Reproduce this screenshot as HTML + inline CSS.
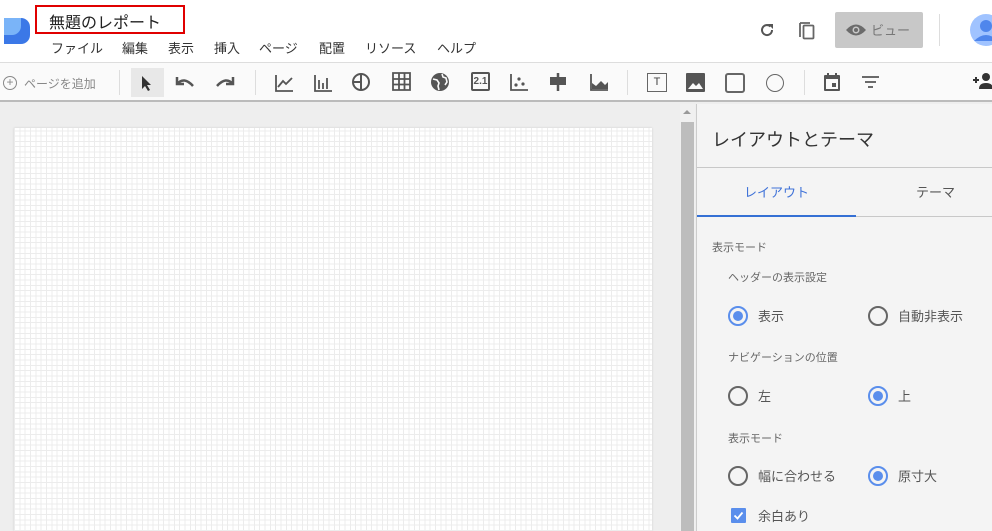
<!DOCTYPE html>
<html><head><meta charset="utf-8"><style>
*{margin:0;padding:0;box-sizing:border-box}
body{width:992px;height:531px;overflow:hidden;position:relative;background:#eee;font-family:"Liberation Sans","Noto Sans CJK JP",sans-serif;color:#333}
.abs{position:absolute}
.hdr{left:0;top:0;width:992px;height:63px;background:#fff;border-bottom:1px solid #ddd}
.tb{left:0;top:63px;width:992px;height:39px;background:#fafafa;border-bottom:2px solid #bbb}
.menu span{position:absolute;top:38px;font-size:13px;color:#333}
.ic{position:absolute;top:71px}
.sep{position:absolute;top:70px;width:1px;height:25px;background:#ddd}
.panel{left:696px;top:104px;width:296px;height:427px;background:#f4f4f4;border-left:1px solid #ccc}
.lbl{position:absolute;font-size:11px;color:#666}
.opt{position:absolute;font-size:13px;color:#555}
.rad{position:absolute;width:20px;height:20px;border-radius:50%;border:2px solid #666}
.rad.on{border-color:#5a8eec}
.rad.on::after{content:"";position:absolute;left:3px;top:3px;width:10px;height:10px;border-radius:50%;background:#5a8eec}
</style></head><body>
<div class="abs hdr"></div>
<svg class="abs" style="left:4px;top:18px" width="26" height="26"><path d="M0 0h17a9 9 0 0 1 9 9v8a9 9 0 0 1-9 9H0z" fill="#3b78e7"/><path d="M0 0h17v8a9 9 0 0 1-9 9H0z" fill="#7ab4f8"/></svg>
<div class="abs" style="left:35px;top:5px;width:150px;height:29px;border:2px solid #e00000"></div>
<div class="abs" style="left:49px;top:9px;font-size:16px;color:#222">無題のレポート</div>
<div class="menu"><span style="left:51px">ファイル</span><span style="left:122px">編集</span><span style="left:168px">表示</span><span style="left:214px">挿入</span><span style="left:259px">ページ</span><span style="left:319px">配置</span><span style="left:365px">リソース</span><span style="left:437px">ヘルプ</span></div>
<svg class="abs" style="left:759px;top:22px" width="16" height="16"><path d="M13 8A5 5 0 1 1 11.5 4.5" stroke="#555" stroke-width="2" fill="none"/><path d="M9 2h5v5z" fill="#555"/></svg>
<svg class="abs" style="left:798px;top:20px" width="18" height="20"><path d="M2 3v14M2 3h10" stroke="#666" stroke-width="1.8" fill="none"/><rect x="5.5" y="5.5" width="10" height="13" rx="1" stroke="#666" stroke-width="1.8" fill="none"/></svg>
<div class="abs" style="left:835px;top:12px;width:88px;height:36px;background:#c8c8c8;border-radius:2px"></div>
<svg class="abs" style="left:845px;top:22px" width="22" height="16"><path d="M1 8Q11-3 21 8Q11 19 1 8z" fill="#6b6b6b"/><circle cx="11" cy="8" r="3.5" fill="#c8c8c8"/><circle cx="11" cy="8" r="2" fill="#6b6b6b"/></svg>
<div class="abs" style="left:871px;top:20px;font-size:13px;color:#777">ビュー</div>
<div class="abs" style="left:939px;top:14px;width:1px;height:32px;background:#ddd"></div>
<svg class="abs" style="left:970px;top:14px" width="22" height="32"><circle cx="16" cy="16" r="16" fill="#a0c3ff"/><circle cx="16" cy="12" r="6" fill="#4f86ec"/><path d="M4 27q12-12 24 0" fill="#4f86ec"/></svg>

<div class="abs tb"></div>
<div class="abs" style="left:3px;top:76px;width:14px;height:14px;border:1.5px solid #888;border-radius:50%;font-size:12px;line-height:10px;text-align:center;color:#888">+</div>
<div class="abs" style="left:24px;top:75px;font-size:12px;color:#888">ページを追加</div>
<div class="sep" style="left:119px"></div>
<div class="abs" style="left:131px;top:68px;width:33px;height:29px;background:#e8e8e8"></div>
<svg class="ic" style="left:140px;top:75px" width="14" height="16"><path d="M2 1v13l3-3 3 5 2-1-3-5h4z" fill="#333"/></svg>
<svg class="ic" style="left:174px;top:74px" width="22" height="14"><path d="M3 3v7h7M3 10Q10 2 19 12" stroke="#555" stroke-width="2.5" fill="none"/></svg>
<svg class="ic" style="left:214px;top:74px" width="22" height="14"><path d="M19 3v7h-7M19 10Q12 2 3 12" stroke="#555" stroke-width="2.5" fill="none"/></svg>
<div class="sep" style="left:255px"></div>
<svg class="ic" style="left:274px;top:73px" width="20" height="20"><path d="M2 2v16h17M4 14l5-6 3 3 6-6" stroke="#555" stroke-width="1.8" fill="none"/></svg>
<svg class="ic" style="left:313px;top:73px" width="20" height="20"><path d="M2 2v16h17M6 16v-9M10 16v-6M14 16v-11" stroke="#555" stroke-width="1.8" fill="none"/></svg>
<svg class="ic" style="left:351px;top:72px" width="20" height="20"><circle cx="10" cy="10" r="8" stroke="#555" stroke-width="2" fill="none"/><path d="M10 2v16M2 10h8" stroke="#555" stroke-width="2"/></svg>
<svg class="ic" style="left:392px;top:72px" width="19" height="19"><path d="M1 1h17v17H1zM1 7h17M1 12.5h17M7 1v17M12.5 1v17" stroke="#555" stroke-width="1.8" fill="none"/></svg>
<svg class="ic" style="left:430px;top:72px" width="20" height="20"><circle cx="10" cy="10" r="9" fill="#555"/><path d="M3 7l4 1 2 3-1 3 1 4M12 2l1 3 3 1 1 4-2 3" stroke="#fafafa" stroke-width="1.6" fill="none"/></svg>
<div class="abs" style="left:471px;top:72px;width:19px;height:19px;border:2px solid #555;border-radius:2px;font-size:10px;font-weight:bold;text-align:center;line-height:15px;color:#555">2.1</div>
<svg class="ic" style="left:509px;top:72px" width="20" height="20"><path d="M2 2v16h17" stroke="#555" stroke-width="1.8" fill="none"/><circle cx="7" cy="13" r="1.6" fill="#555"/><circle cx="10" cy="7" r="1.6" fill="#555"/><circle cx="14" cy="12" r="1.6" fill="#555"/></svg>
<svg class="ic" style="left:548px;top:72px" width="20" height="20"><path d="M10 1v18" stroke="#555" stroke-width="2.5"/><rect x="2" y="5" width="16" height="8" fill="#555"/></svg>
<svg class="ic" style="left:589px;top:72px" width="20" height="20"><path d="M2 2v16h17" stroke="#555" stroke-width="1.8" fill="none"/><path d="M3 17v-6l4 3 5-5 4 4 3-3v7z" fill="#555"/></svg>
<div class="sep" style="left:627px"></div>
<div class="abs" style="left:647px;top:73px;width:20px;height:19px;border:1.5px solid #666;font-size:11px;text-align:center;line-height:16px;color:#444">T</div>
<svg class="ic" style="left:686px;top:73px" width="20" height="19"><rect x="0" y="0" width="19" height="19" rx="1" fill="#555"/><path d="M2 16l5-6 3 3 3-3 4 6z" fill="#fafafa"/></svg>
<div class="abs" style="left:725px;top:73px;width:20px;height:20px;border:2px solid #666;border-radius:3px"></div>
<div class="abs" style="left:766px;top:74px;width:18px;height:18px;border:1.8px solid #666;border-radius:50%"></div>
<div class="sep" style="left:804px"></div>
<svg class="ic" style="left:823px;top:72px" width="18" height="20"><rect x="1" y="3" width="16" height="16" rx="1" fill="#555"/><rect x="3" y="7" width="12" height="10" fill="#fafafa"/><rect x="9" y="11" width="4" height="4" fill="#555"/><path d="M5 1v3M13 1v3" stroke="#555" stroke-width="2"/></svg>
<svg class="ic" style="left:861px;top:75px" width="19" height="14"><path d="M1 2h17M4 7h11M7 12h5" stroke="#555" stroke-width="1.8"/></svg>
<svg class="ic" style="left:972px;top:72px" width="20" height="18"><path d="M1 8h6M4 5v6" stroke="#333" stroke-width="2"/><circle cx="14" cy="5" r="4" fill="#333"/><path d="M7 17q0-6 7-6t7 6z" fill="#333"/></svg>

<div class="abs" style="left:14px;top:128px;width:638px;height:403px;background-color:#fff;background-image:repeating-linear-gradient(90deg,#ececec 0 1px,transparent 1px 5.33px),repeating-linear-gradient(0deg,#ececec 0 1px,transparent 1px 5.33px);box-shadow:0 0 2px #ccc"></div>
<div class="abs" style="left:680px;top:104px;width:15px;height:427px;background:#f0f0f0"></div>
<div class="abs" style="left:681px;top:122px;width:13px;height:409px;background:#bdbdbd"></div>
<div class="abs" style="left:683px;top:110px;width:0;height:0;border:4px solid transparent;border-bottom:4px solid #999;border-top:0"></div>

<div class="abs panel"></div>
<div class="abs" style="left:712px;top:126px;font-size:18px;color:#333">レイアウトとテーマ</div>
<div class="abs" style="left:697px;top:167px;width:295px;height:1px;background:#c8c8c8"></div>
<div class="abs" style="left:744px;top:182px;font-size:13px;color:#3f72d8">レイアウト</div>
<div class="abs" style="left:916px;top:182px;font-size:13px;color:#555">テーマ</div>
<div class="abs" style="left:697px;top:216px;width:295px;height:1px;background:#c8c8c8"></div>
<div class="abs" style="left:697px;top:215px;width:159px;height:2px;background:#3570d4"></div>
<div class="lbl" style="left:712px;top:239px">表示モード</div>
<div class="lbl" style="left:728px;top:269px">ヘッダーの表示設定</div>
<div class="rad on" style="left:728px;top:306px"></div><div class="opt" style="left:758px;top:306px">表示</div>
<div class="rad" style="left:868px;top:306px"></div><div class="opt" style="left:898px;top:306px">自動非表示</div>
<div class="lbl" style="left:728px;top:349px">ナビゲーションの位置</div>
<div class="rad" style="left:728px;top:386px"></div><div class="opt" style="left:758px;top:386px">左</div>
<div class="rad on" style="left:868px;top:386px"></div><div class="opt" style="left:898px;top:386px">上</div>
<div class="lbl" style="left:728px;top:430px">表示モード</div>
<div class="rad" style="left:728px;top:466px"></div><div class="opt" style="left:758px;top:466px">幅に合わせる</div>
<div class="rad on" style="left:868px;top:466px"></div><div class="opt" style="left:898px;top:466px">原寸大</div>
<svg class="abs" style="left:731px;top:508px" width="15" height="15"><rect width="15" height="15" rx="1" fill="#5a8eec"/><path d="M3.5 7.5l3 3 5-6" stroke="#fff" stroke-width="1.8" fill="none"/></svg>
<div class="opt" style="left:758px;top:506px">余白あり</div>
</body></html>
